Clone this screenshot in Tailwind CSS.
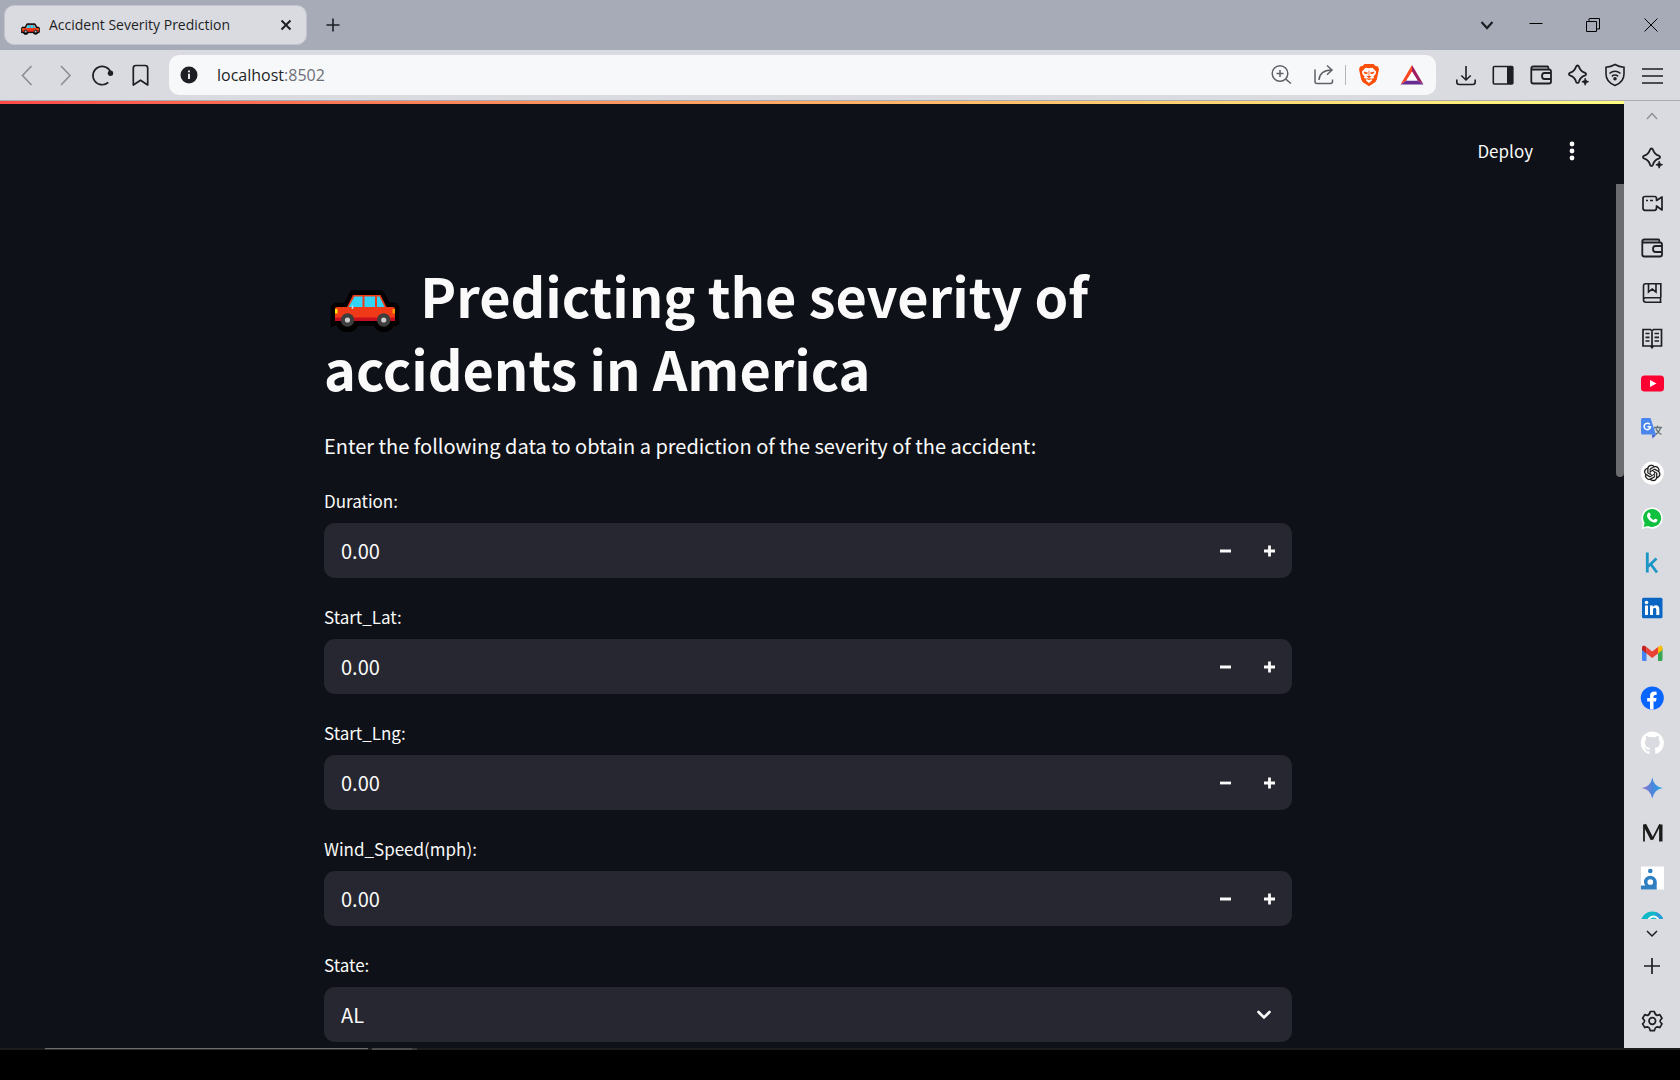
<!DOCTYPE html>
<html lang="en">
<head>
<meta charset="utf-8">
<title>Accident Severity Prediction</title>
<script src="https://cdn.jsdelivr.net/npm/@tailwindcss/browser@4"></script>
</head>
<body class="flex h-screen flex-col overflow-hidden bg-black font-['Open_Sans',sans-serif] text-[#1d1f25]">

<!-- Shared icon shapes -->
<svg class="hidden" aria-hidden="true">
  <symbol id="car" viewBox="0 0 70 42">
    <path d="M2 36V16.500L5 14H15L21.500 1.500H52L59 14H65L68 17V33L66 34.500H63A10 10 0 0 1 44.500 34.500H27A10 10 0 0 1 8 34.500H2Z" fill="#000" stroke="#000" stroke-width="2.500" stroke-linejoin="round"/>
    <path d="M23 5H50.500L56.500 17H62.500Q65 17 65 19V31H5V18.500Q5 17 6.500 17H17Z" fill="#f03a17"/>
    <path d="M5 27.500H65V31H5Z" fill="#c50f1f"/>
    <path d="M24.500 6.500H32.500V17H18.500ZM34.500 6.500H45V17H34.500ZM47 6.500H49.500L54.500 17H47Z" fill="#32d4f9"/>
    <path d="M5 19H7.500V23.500H5Z" fill="#fde300"/><path d="M62.500 19H65V23.500H62.500Z" fill="#ff9a00"/>
    <path d="M22.500 15.500V19" stroke="#cdd" stroke-width="1.500"/>
    <circle cx="17.500" cy="30" r="6.700" fill="#3d3d3d"/><circle cx="53.700" cy="30" r="6.700" fill="#3d3d3d"/>
    <circle cx="17.500" cy="30" r="2.600" fill="#ccc"/><circle cx="53.700" cy="30" r="2.600" fill="#ccc"/>
  </symbol>
  <symbol id="sparkle" viewBox="0 0 24 24">
    <path d="M11.500 2.500c.8 0 1.200.4 1.500 1.300 1 3.400 2 4.600 5.600 5.900 1 .4 1.500.8 1.500 1.500s-.5 1.100-1.500 1.500c-3.600 1.300-4.600 2.500-5.600 5.900-.3.900-.7 1.300-1.500 1.300s-1.200-.4-1.500-1.300c-1-3.400-2-4.600-5.600-5.900-1-.4-1.500-.8-1.500-1.500s.5-1.100 1.500-1.500c3.600-1.300 4.600-2.500 5.600-5.900.3-.9.700-1.300 1.500-1.300Z" fill="none" stroke="currentColor" stroke-width="1.800"/>
    <path d="M19.200 15.200c.5 2.200 1 2.800 3.300 3.500-2.300.7-2.800 1.300-3.300 3.500-.5-2.200-1-2.800-3.300-3.500 2.300-.7 2.800-1.300 3.300-3.500Z" fill="currentColor" stroke="currentColor" stroke-width="1"/>
  </symbol>
  <symbol id="wallet" viewBox="0 0 24 24">
    <path d="M2.300 5.500V18.500Q2.300 20.500 4.300 20.500H20Q22 20.500 22 18.500V8.500Q22 6.500 20 6.500H4.300Q2.300 6.500 2.300 5 2.300 3.500 4.300 3.500H18.500Q19.500 3.500 19.500 6.500M22 10H15.500Q13 10 13 13T15.500 16H22" fill="none" stroke="currentColor" stroke-width="1.800"/>
  </symbol>
  <symbol id="minus" viewBox="0 0 12 12"><path d="M0 6H11" stroke="currentColor" stroke-width="2.800"/></symbol>
  <symbol id="plus" viewBox="0 0 12 12"><path d="M0 6H11M5.500 .5V11.500" stroke="currentColor" stroke-width="2.800"/></symbol>
</svg>

<!-- Tab strip -->
<div class="flex h-[50px] shrink-0 items-center justify-between bg-[#a7abb8] pl-1">
  <div class="flex items-center">
    <div class="flex h-10 w-[303px] items-center rounded-[10px] border border-[#c3c5ce] bg-[#dadbe0] pr-3 pl-4">
      <svg class="mt-2 h-3 w-[19px] shrink-0"><use href="#car"/></svg>
      <span class="ml-[9px] flex-1 text-sm whitespace-nowrap">Accident Severity Prediction</span>
      <button aria-label="Close tab" class="flex size-4"><svg viewBox="0 0 16 16" class="size-4"><path d="M3.500 3.500L12.500 12.500M12.500 3.500L3.500 12.500" stroke="#1d1f25" stroke-width="2"/></svg></button>
    </div>
    <button aria-label="New tab" class="ml-4 flex size-5 items-center justify-center"><svg viewBox="0 0 14 14" class="size-[14px]"><path d="M.5 7H13.500M7 .5V13.500" stroke="#1d1f25" stroke-width="1.600"/></svg></button>
  </div>
  <div class="flex items-center">
    <button aria-label="Search tabs" class="flex w-10 justify-center"><svg viewBox="0 0 14 14" class="size-[14px]"><path d="M1.500 4L7 10L12.500 4" fill="none" stroke="#1d1f25" stroke-width="2.200"/></svg></button>
    <button aria-label="Minimise" class="flex w-[58px] justify-center"><svg viewBox="0 0 14 14" class="size-[14px]"><path d="M.5 5.500H13.500" stroke="#000"/></svg></button>
    <button aria-label="Restore" class="flex w-14 justify-center"><svg viewBox="0 0 14 14" class="size-[14px]"><path d="M.5 3.500H10.500V13.500H.5ZM3 3V1Q3 .5 3.500 .5H13.500V11H11" fill="none" stroke="#000"/></svg></button>
    <button aria-label="Close" class="flex w-[59px] justify-center"><svg viewBox="0 0 14 14" class="size-[14px]"><path d="M.5 .5L13.500 13.500M13.500 .5L.5 13.500" stroke="#000"/></svg></button>
  </div>
</div>

<!-- Toolbar -->
<div class="flex h-[51px] shrink-0 items-center border-b border-[#abacb1] bg-[#dadbe0] pr-[10px] pl-2">
  <button aria-label="Back" class="flex w-[38px] justify-center"><svg viewBox="0 0 24 24" class="size-6"><path d="M16.500 3L7.500 12.500L16.500 22" fill="none" stroke="#8b8d94" stroke-width="1.600"/></svg></button>
  <button aria-label="Forward" class="flex w-[38px] justify-center"><svg viewBox="0 0 24 24" class="size-6"><path d="M8 3L17 12.500L8 22" fill="none" stroke="#8b8d94" stroke-width="1.600"/></svg></button>
  <button aria-label="Reload" class="flex w-[38px] justify-center"><svg viewBox="0 0 24 24" class="size-6"><path d="M20 10A9.200 9.200 0 1 0 17.300 19.400" fill="none" stroke="#1d1f25" stroke-width="1.700"/><circle cx="19.500" cy="10.200" r="2.700" fill="#1d1f25"/></svg></button>
  <button aria-label="Bookmark" class="flex w-[38px] justify-center"><svg viewBox="0 0 24 24" class="size-6"><path d="M4.300 22V5Q4.300 2.500 6.800 2.500H16.200Q18.700 2.500 18.700 5V22L11.500 17.200Z" fill="none" stroke="#1d1f25" stroke-width="1.700" stroke-linejoin="round"/></svg></button>
  <div class="ml-[9px] flex h-10 min-w-0 flex-1 items-center rounded-[10px] bg-[#f7f8fa] pr-[3px] pl-2">
    <button aria-label="Site information" class="flex size-6 items-center justify-center"><svg viewBox="0 0 18 18" class="size-[18px]"><circle cx="9" cy="9" r="8.500" fill="#1d1f25"/><path d="M9 7.800V13M9 4.500V6.300" stroke="#f7f8fa" stroke-width="1.800"/></svg></button>
    <div role="textbox" aria-label="Address" contenteditable="true" class="ml-4 flex-1 text-base outline-none">localhost<span class="text-[#6d6f76]">:8502</span></div>
    <button aria-label="Zoom" class="flex w-[43px] justify-center text-[#5f6168]"><svg viewBox="0 0 24 24" class="size-6" fill="none" stroke="currentColor" stroke-width="1.500"><circle cx="11" cy="10.500" r="7.800"/><path d="M16.700 16.200L22 20.500M11 7V14M7.500 10.500H14.500"/></svg></button>
    <button aria-label="Share" class="flex w-[43px] justify-center text-[#5f6168]"><svg viewBox="0 0 24 24" class="size-6" fill="none" stroke="currentColor" stroke-width="1.500"><path d="M3 6.500V18.500Q3 20.500 5 20.500H18.500Q20.500 20.500 20.500 18.500V16.500M7 17Q7.500 7.500 19.500 7M15 2.500L20 7L15 11.800"/></svg></button>
    <span class="mr-1 h-5 w-px bg-[#b4b6bc]"></span>
    <button aria-label="Brave Shields" class="-ml-[3px] flex w-[43px] justify-center"><svg viewBox="0 0 24 24" class="size-6"><path d="M7.500 1H16.500L18.500 3L21 3.500L22 6.500L21.500 8.500L19.800 16.500Q19 18.800 17 20L12 23.300L7 20Q5 18.800 4.200 16.500L2.500 8.500L2 6.500L3 3.500L5.500 3Z" fill="#fb4f0a"/><path d="M12 5.200L15.500 4.700L19 8.500Q19.500 10 18 11.800L16.500 13.300L17 15L14.500 16L15 17.500L12 20L9 17.500L9.500 16L7 15L7.500 13.300L6 11.800Q4.500 10 5 8.500L8.500 4.700Z" fill="#fff"/><path d="M7 9L10.500 9.800L9.800 10.800L7.800 10.500ZM17 9L13.500 9.800L14.200 10.800L16.200 10.500ZM12 7.500V13.500M9.800 13L12 14.800L14.200 13M9.500 15.500L12 16.800L14.500 15.500" fill="#fb4f0a" stroke="#fb4f0a" stroke-width=".8" fill-rule="evenodd"/></svg></button>
    <button aria-label="Brave Rewards" class="flex w-[43px] justify-center"><svg viewBox="0 0 24 24" class="size-6"><path d="M12 2V9L6.500 17.500L.5 21.500Z" fill="#ff4724"/><path d="M12 2L23.500 21.500L17.500 17.500L12 9Z" fill="#9e1f63"/><path d="M.5 21.500L6.500 17.500H17.500L23.500 21.500Z" fill="#662d91"/><path d="M12 8.500L17.500 17.500H6.500Z" fill="#fff"/></svg></button>
  </div>
  <div class="ml-3 flex items-center">
    <button aria-label="Downloads" class="flex w-[37px] justify-center"><svg viewBox="0 0 24 24" class="size-6" fill="none" stroke="currentColor" stroke-width="1.600"><path d="M11 3V17M6.300 12.500L11 17L15.700 12.500M1.800 16.500V19Q1.800 21.500 4.300 21.500H17.700Q20.200 21.500 20.200 19V16.500"/></svg></button>
    <button aria-label="Sidebar" class="flex w-[37px] justify-center"><svg viewBox="0 0 24 24" class="size-6"><rect x="1.300" y="3.500" width="19.500" height="17.500" rx="1" fill="none" stroke="#1d1f25" stroke-width="1.600"/><path d="M15 3.500H21V21H15Z" fill="#1d1f25"/></svg></button>
    <button aria-label="Wallet" class="flex w-[37px] justify-center"><svg class="size-6"><use href="#wallet"/></svg></button>
    <button aria-label="Leo AI" class="flex w-[37px] justify-center"><svg class="size-6"><use href="#sparkle"/></svg></button>
    <button aria-label="VPN" class="flex w-[37px] justify-center"><svg viewBox="0 0 24 24" class="size-6" fill="none" stroke="currentColor" stroke-width="1.600"><path d="M12 1.500Q16 3.800 21 4.300V11Q21 19 12 22.500Q3 19 3 11V4.300Q8 3.800 12 1.500ZM6.500 10.500Q12 6 17.500 10.500M8.800 13.300Q12 10.800 15.200 13.300"/><circle cx="12" cy="15.700" r="1" fill="currentColor"/></svg></button>
    <button aria-label="Menu" class="flex w-[37px] justify-center"><svg viewBox="0 0 24 24" class="size-6" stroke="currentColor" stroke-width="1.600"><path d="M2 6H23M2 13H23M2 20H23"/></svg></button>
  </div>
</div>

<div class="flex min-h-0 flex-1">
  <!-- Streamlit page -->
  <div class="flex min-w-0 flex-1 flex-col bg-[#0e1117] font-['Noto_Sans_CJK_SC',sans-serif] text-[#fafafa]">
    <div class="h-[3px] shrink-0 bg-linear-to-r from-[#ff4b4b] to-[#fffd80]"></div>
    <div class="flex min-h-0 flex-1">
      <div class="flex min-w-0 flex-1 flex-col overflow-hidden">
        <header class="flex h-[94px] shrink-0 items-center justify-end pr-[34px]">
          <button class="text-[17px] leading-6">Deploy</button>
          <button aria-label="Main menu" class="ml-[29px] flex w-5 justify-center"><svg viewBox="0 0 6 20" class="h-5 w-[6px]" fill="#fafafa"><circle cx="3" cy="3" r="2.400"/><circle cx="3" cy="10" r="2.400"/><circle cx="3" cy="17" r="2.400"/></svg></button>
        </header>
        <main class="mx-auto w-full max-w-[968px] pt-[61px]">
          <h1 class="text-[54px] leading-[72px] font-bold"><svg role="img" aria-label="Car" class="mr-2 ml-[6px] inline-block h-[42px] w-[70px] align-[-14px]"><use href="#car"/></svg> Predicting the severity of accidents in America</h1>
          <p class="mt-[26px] text-xl leading-8">Enter the following data to obtain a prediction of the severity of the accident:</p>
          <form class="mt-[27px] flex flex-col gap-[27px]">
            <div class="flex flex-col gap-[10px]">
              <label for="duration" class="text-[17px] leading-6">Duration:</label>
              <div class="flex h-[55px] overflow-hidden rounded-[11px] bg-[#262730]">
                <input id="duration" type="number" step="0.01" value="0.00" class="min-w-0 flex-1 [appearance:textfield] pl-[17px] text-xl outline-none">
                <button type="button" aria-label="Decrease Duration" class="flex w-11 items-center justify-center"><svg class="size-3"><use href="#minus"/></svg></button>
                <button type="button" aria-label="Increase Duration" class="flex w-11 items-center justify-center"><svg class="size-3"><use href="#plus"/></svg></button>
              </div>
            </div>
            <div class="flex flex-col gap-[10px]">
              <label for="lat" class="text-[17px] leading-6">Start_Lat:</label>
              <div class="flex h-[55px] overflow-hidden rounded-[11px] bg-[#262730]">
                <input id="lat" type="number" step="0.01" value="0.00" class="min-w-0 flex-1 [appearance:textfield] pl-[17px] text-xl outline-none">
                <button type="button" aria-label="Decrease Start_Lat" class="flex w-11 items-center justify-center"><svg class="size-3"><use href="#minus"/></svg></button>
                <button type="button" aria-label="Increase Start_Lat" class="flex w-11 items-center justify-center"><svg class="size-3"><use href="#plus"/></svg></button>
              </div>
            </div>
            <div class="flex flex-col gap-[10px]">
              <label for="lng" class="text-[17px] leading-6">Start_Lng:</label>
              <div class="flex h-[55px] overflow-hidden rounded-[11px] bg-[#262730]">
                <input id="lng" type="number" step="0.01" value="0.00" class="min-w-0 flex-1 [appearance:textfield] pl-[17px] text-xl outline-none">
                <button type="button" aria-label="Decrease Start_Lng" class="flex w-11 items-center justify-center"><svg class="size-3"><use href="#minus"/></svg></button>
                <button type="button" aria-label="Increase Start_Lng" class="flex w-11 items-center justify-center"><svg class="size-3"><use href="#plus"/></svg></button>
              </div>
            </div>
            <div class="flex flex-col gap-[10px]">
              <label for="wind" class="text-[17px] leading-6">Wind_Speed(mph):</label>
              <div class="flex h-[55px] overflow-hidden rounded-[11px] bg-[#262730]">
                <input id="wind" type="number" step="0.01" value="0.00" class="min-w-0 flex-1 [appearance:textfield] pl-[17px] text-xl outline-none">
                <button type="button" aria-label="Decrease Wind_Speed" class="flex w-11 items-center justify-center"><svg class="size-3"><use href="#minus"/></svg></button>
                <button type="button" aria-label="Increase Wind_Speed" class="flex w-11 items-center justify-center"><svg class="size-3"><use href="#plus"/></svg></button>
              </div>
            </div>
            <div class="flex flex-col gap-[10px]">
              <label for="state" class="text-[17px] leading-6">State:</label>
              <div class="relative">
                <select id="state" class="h-[55px] w-full appearance-none rounded-[11px] bg-[#262730] pl-[17px] text-xl outline-none"><option>AL</option></select>
                <svg viewBox="0 0 16 16" class="pointer-events-none absolute top-5 right-5 size-4"><path d="M2.500 5L8 10.500L13.500 5" fill="none" stroke="#fafafa" stroke-width="2.600" stroke-linecap="round"/></svg>
              </div>
            </div>
          </form>
        </main>
      </div>
      <div class="w-2 shrink-0 pt-20"><div class="h-[293px] rounded-b-full bg-[#6b6c70]"></div></div>
    </div>
  </div>

  <!-- Browser sidebar -->
  <nav aria-label="Sidebar" class="flex w-14 shrink-0 flex-col items-center bg-[#dadbe0]">
    <button aria-label="Scroll up" class="flex h-[34px] shrink-0 items-center pb-1"><svg viewBox="0 0 12 12" class="size-3"><path d="M1 9L6 3.500L11 9" fill="none" stroke="#8b8d94" stroke-width="1.300"/></svg></button>
    <div class="flex min-h-0 flex-1 flex-col overflow-hidden">
      <button aria-label="Leo AI" class="flex h-[45px] shrink-0 items-center"><svg class="size-6"><use href="#sparkle"/></svg></button>
      <button aria-label="Talk" class="flex h-[45px] shrink-0 items-center"><svg viewBox="0 0 24 24" class="size-6" fill="none" stroke="currentColor" stroke-width="1.700"><path d="M5 5.500H14.500Q16.500 5.500 16.500 7.500V9.500L22 6V19L16.500 15V17Q16.500 19.300 14.500 19.300H5Q3 19.300 3 17V7.500Q3 5.500 5 5.500ZM6 9.500H8M10 9.500H13" stroke-linejoin="round"/></svg></button>
      <button aria-label="Wallet" class="flex h-[45px] shrink-0 items-center"><svg class="size-6"><use href="#wallet"/></svg></button>
      <button aria-label="Bookmarks" class="flex h-[45px] shrink-0 items-center"><svg viewBox="0 0 24 24" class="size-6" fill="none" stroke="currentColor" stroke-width="1.600"><path d="M21.500 21.300H6Q3.500 21.300 3.500 18.800V5Q3.500 2.800 5.500 2.800H20.800V16.800M3.500 18.800Q3.500 16.800 6 16.800H21M20.500 17V21M8.500 3V11L12.200 8L16 11V3"/></svg></button>
      <button aria-label="Reading list" class="flex h-[45px] shrink-0 items-center"><svg viewBox="0 0 24 24" class="size-6" fill="none" stroke="currentColor" stroke-width="1.700"><path d="M3 3.500H10.500L12 5L13.500 3.500H21.500V20H13.500L12 21.500L10.500 20H3ZM12 4.500V22.500M5.500 7.500H9.500M5.500 11.300H9.500M5.500 15H9.500M14.500 7.500H19M14.500 11.300H19M14.500 15H19"/></svg></button>
      <button aria-label="YouTube" class="flex h-[45px] shrink-0 items-center"><svg viewBox="0 0 24 24" class="size-6"><rect x="1" y="4.500" width="23" height="16" rx="3.500" fill="#ff0033"/><path d="M10 9V16L16.500 12.500Z" fill="#fff"/></svg></button>
      <button aria-label="Google Translate" class="flex h-[45px] shrink-0 items-center"><svg viewBox="0 0 24 24" class="size-6"><path d="M10 6H21Q22.500 6 22.500 7.500V21Q22.500 22.500 21 22.500H14Z" fill="#dedede"/><path d="M14 11.500H22M17.500 9.500V11.500M20.500 11.500Q19.500 16 15.500 18.500M15.800 12.500Q18 17 21.500 18.500" fill="none" stroke="#66757b" stroke-width="1.300"/><path d="M12 18.500H16.500L12.500 22.500Z" fill="#3a5bd0"/><path d="M2.500 2H10.500L16 18.500H2.500Q1 18.500 1 17V3.500Q1 2 2.500 2Z" fill="#4a86ee"/><path d="M9.800 8.400A3.200 3.200 0 1 0 10.500 10.700H7.500" fill="none" stroke="#fff" stroke-width="1.500"/></svg></button>
      <button aria-label="ChatGPT" class="flex h-[45px] shrink-0 items-center"><svg viewBox="0 0 24 24" class="size-6"><circle cx="12.300" cy="12" r="11.500" fill="#fff"/><path transform="translate(4.100 3.800) scale(.68)" fill="#111" stroke="#111" stroke-width=".3" d="M22.282 9.821a5.985 5.985 0 0 0-.516-4.910 6.046 6.046 0 0 0-6.510-2.900A6.065 6.065 0 0 0 4.981 4.182a5.985 5.985 0 0 0-3.998 2.900 6.046 6.046 0 0 0 .743 7.097 5.980 5.980 0 0 0 .511 4.911 6.051 6.051 0 0 0 6.515 2.900A5.985 5.985 0 0 0 13.260 24a6.056 6.056 0 0 0 5.772-4.206 5.989 5.989 0 0 0 3.998-2.900 6.056 6.056 0 0 0-.748-7.073zm-9.022 12.608a4.476 4.476 0 0 1-2.876-1.041l.142-.080 4.778-2.758a.795.795 0 0 0 .393-.681v-6.737l2.020 1.169a.071.071 0 0 1 .038.052v5.583a4.504 4.504 0 0 1-4.495 4.494zm-9.661-4.125a4.471 4.471 0 0 1-.535-3.014l.142.085 4.783 2.758a.771.771 0 0 0 .781 0l5.843-3.369v2.332a.080.080 0 0 1-.033.062L9.740 19.950a4.499 4.499 0 0 1-6.141-1.646zM2.341 7.896a4.485 4.485 0 0 1 2.366-1.973V11.600a.766.766 0 0 0 .388.677l5.814 3.354-2.020 1.169a.076.076 0 0 1-.071 0l-4.830-2.787A4.504 4.504 0 0 1 2.341 7.872zm16.596 3.856L13.104 8.364 15.119 7.200a.076.076 0 0 1 .071 0l4.830 2.791a4.494 4.494 0 0 1-.677 8.104v-5.677a.790.790 0 0 0-.407-.667zm2.011-3.023l-.142-.085-4.774-2.782a.776.776 0 0 0-.785 0L9.409 9.230V6.897a.066.066 0 0 1 .028-.061l4.830-2.787a4.499 4.499 0 0 1 6.680 4.660zM8.307 12.863l-2.020-1.164a.080.080 0 0 1-.038-.057V6.074a4.499 4.499 0 0 1 7.376-3.454l-.142.081L8.704 5.459a.795.795 0 0 0-.393.681zm1.097-2.365l2.602-1.500 2.607 1.500v2.999l-2.597 1.500-2.607-1.500Z"/></svg></button>
      <button aria-label="WhatsApp" class="flex h-[45px] shrink-0 items-center"><svg viewBox="0 0 24 24" class="size-6"><path d="M1.500 23L3 17.500A10.600 10.600 0 1 1 7.300 21.500Z" fill="#fff"/><path d="M3.500 21L4.700 17A9 9 0 1 1 8 19.900Z" fill="#0fbf3e"/><path d="M8.200 6.800Q9.400 6 10 7.200L10.700 8.800Q10.900 9.400 9.800 10.500Q11.200 13 13.700 13.900Q14.900 12.400 15.500 12.700L17.300 13.600Q17.700 14 17.200 15.200Q15.800 17.200 13 16.200Q8.700 14.700 7.100 10.700Q6.600 8.200 8.200 6.800Z" fill="#fff"/></svg></button>
      <button aria-label="Kaggle" class="flex h-[45px] shrink-0 items-center"><svg viewBox="0 0 24 24" class="size-6" fill="none" stroke="#1c96c5" stroke-width="2.800"><path d="M7.300 1.500V21.500M16.500 7.500L8 15.500M10.300 12.500L17 21.500"/></svg></button>
      <button aria-label="LinkedIn" class="flex h-[45px] shrink-0 items-center"><svg viewBox="0 0 24 24" class="size-6"><rect x="2" y="1.800" width="20.500" height="20.500" rx="1.500" fill="#0a66c2"/><circle cx="6.500" cy="6.500" r="1.800" fill="#fff"/><path d="M5 9.500H8V19H5ZM10 9.500H12.800V10.900Q13.800 9.200 15.800 9.200Q19.300 9.200 19.300 13.300V19H16.300V13.900Q16.300 11.800 14.700 11.800Q13 11.800 13 13.900V19H10Z" fill="#fff"/></svg></button>
      <button aria-label="Gmail" class="flex h-[45px] shrink-0 items-center"><svg viewBox="0 0 24 24" class="size-6"><path d="M2 7L6.500 10.500V20H3.500Q2 20 2 18.500Z" fill="#4285f4"/><path d="M22.500 7L18 10.500V20H21Q22.500 20 22.500 18.500Z" fill="#34a853"/><path d="M18 6L19.500 4.900Q22.500 3.500 22.500 7V9L18 12.500Z" fill="#fbbc04"/><path d="M6.500 6L12.200 10.400L18 6V12.500L12.200 17L6.500 12.500Z" fill="#ea4335"/><path d="M6.500 6L5 4.900Q2 3.500 2 7V9L6.500 12.500Z" fill="#c5221f"/></svg></button>
      <button aria-label="Facebook" class="flex h-[45px] shrink-0 items-center"><svg viewBox="0 0 24 24" class="size-6"><circle cx="12.300" cy="12" r="11.500" fill="#0866ff"/><path d="M10 23.300V15.500H7.200V12H10V10Q10 5.500 14.200 5.500Q15.800 5.500 16.600 5.800V9H15Q13.500 9 13.500 10.500V12H16.600L16 15.500H13.500V23.400Z" fill="#fff"/></svg></button>
      <button aria-label="GitHub" class="flex h-[45px] shrink-0 items-center"><svg viewBox="0 0 24 24" class="size-6"><path d="M12.300 .5C5.900 .5 .8 5.700 .8 12c0 5.100 3.300 9.400 7.900 10.900.6.100.8-.2.8-.6v-2c-3.200.7-3.900-1.500-3.900-1.500-.5-1.300-1.300-1.700-1.300-1.700-1-.7.1-.7.1-.7 1.200.1 1.800 1.200 1.800 1.200 1 1.800 2.700 1.300 3.300 1 .1-.7.4-1.300.7-1.600-2.600-.3-5.200-1.300-5.200-5.700 0-1.300.4-2.300 1.200-3.100-.1-.3-.5-1.500.1-3.100 0 0 1-.3 3.200 1.200a11 11 0 0 1 5.800 0c2.200-1.500 3.200-1.200 3.200-1.200.6 1.600.2 2.800.1 3.100.7.800 1.200 1.800 1.200 3.100 0 4.400-2.700 5.400-5.300 5.700.4.400.8 1.100.8 2.100v3.200c0 .3.200.7.800.6A11.500 11.500 0 0 0 12.300 .5Z" fill="#fff"/></svg></button>
      <button aria-label="Gemini" class="flex h-[45px] shrink-0 items-center"><svg viewBox="0 0 24 24" class="size-6"><defs><linearGradient id="gem" x1="0" x2="1" y1=".5" y2=".4"><stop offset="0" stop-color="#9b72cb"/><stop offset=".5" stop-color="#4a86dc"/><stop offset="1" stop-color="#25a9e8"/></linearGradient></defs><path d="M12.300 1.500Q13.800 10.500 22.800 12Q13.800 13.500 12.300 22.500Q10.800 13.500 1.800 12Q10.800 10.500 12.300 1.500Z" fill="url(#gem)"/></svg></button>
      <button aria-label="Medium" class="flex h-[45px] shrink-0 items-center"><svg viewBox="0 0 24 24" class="size-6" fill="none" stroke="#1a1a1a"><path d="M4 3.500V20.500" stroke-width="1.800"/><path d="M4.500 3.500L12.300 18.500" stroke-width="3.400"/><path d="M12.300 18.500L20 3.500" stroke-width="1.700"/><path d="M20.800 3.500V20.500" stroke-width="3.400"/></svg></button>
      <button aria-label="Mostaql" class="flex h-[45px] shrink-0 items-center"><svg viewBox="0 0 24 24" class="size-6"><path d="M1 .5H24V23.500H1Z" fill="#fff"/><circle cx="10.300" cy="5" r="2.300" fill="#2f7fc1"/><circle cx="10.300" cy="16" r="4.600" fill="none" stroke="#2f7fc1" stroke-width="3.500"/><path d="M1 19.500H8L10 20H13.200V16H16.700V23.500H1Z" fill="#2f7fc1"/></svg></button>
      <button aria-label="Edge" class="flex h-[45px] shrink-0 items-center"><svg viewBox="0 0 24 24" class="size-6"><circle cx="12.300" cy="12" r="11.500" fill="#12b8c8"/><path d="M16 1A11.500 11.500 0 0 1 23.800 12H16Z" fill="#2a9ad8"/><circle cx="13.500" cy="11" r="5.500" fill="none" stroke="#fff" stroke-width="2"/></svg></button>
    </div>
    <button aria-label="Scroll down" class="mt-2 flex h-3 shrink-0 items-center"><svg viewBox="0 0 12 12" class="size-3"><path d="M1 4L6 9L11 4" fill="none" stroke="#1d1f25" stroke-width="1.500"/></svg></button>
    <button aria-label="Add to sidebar" class="mt-[17px] flex size-5 shrink-0 items-center justify-center"><svg viewBox="0 0 18 18" class="size-[18px]"><path d="M1 9H17M9 1V17" stroke="#1d1f25" stroke-width="1.700"/></svg></button>
    <button aria-label="Settings" class="mt-[33px] mb-[15px] flex size-6 shrink-0"><svg viewBox="0 0 24 24" class="size-6" fill="none" stroke="currentColor" stroke-width="1.700"><circle cx="12.300" cy="12" r="3.300"/><path d="M10.300 2.500H14.300Q15 5.800 17 6.400Q18.500 6 19.800 5.600L22 9.300Q20 11 20 12T22 14.900L19.800 18.600Q18.500 18 17 17.800Q15 18.500 14.300 21.700H10.300Q9.600 18.500 7.600 17.800Q6 18 4.800 18.600L2.600 14.900Q4.600 13 4.600 12T2.600 9.300L4.800 5.600Q6 6 7.600 6.400Q9.600 5.800 10.300 2.500Z" stroke-linejoin="round"/></svg></button>
  </nav>
</div>

<!-- Sliver of the taskbar under the window -->
<div class="flex h-8 shrink-0 flex-col">
  <div class="flex h-[2px] bg-[#1c1c1c] pl-[45px]">
    <span class="w-[323px] border-t border-[#6a6c6c] bg-[#2e3030]"></span>
    <span class="ml-1 w-10 bg-[#4a4a4a]"></span>
    <span class="w-[5px] bg-[#333]"></span>
  </div>
</div>
</body>
</html>
